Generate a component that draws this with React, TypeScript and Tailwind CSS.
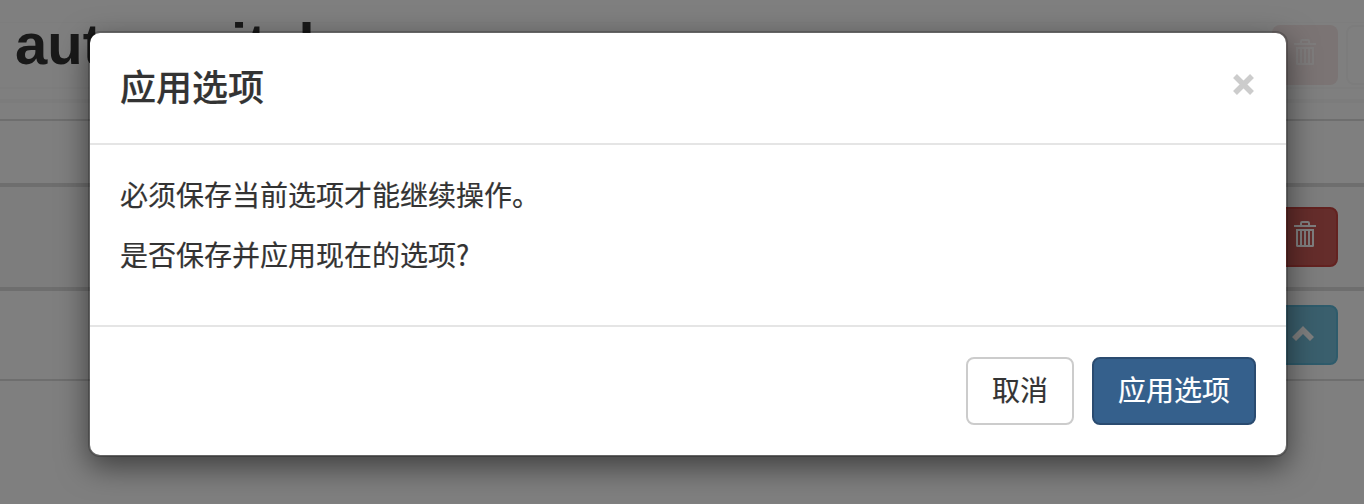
import React from "react";

function Trash({ className, faint }: { className: string; faint?: boolean }) {
  return (
    <svg viewBox="0 0 22 27" className={className} fill="none" stroke="currentColor">
      <path d="M0 5h22" strokeWidth="2" />
      <path d="M7 4.5V2.2Q7 1 8.2 1h5.6Q15 1 15 2.2v2.3" strokeWidth="2" />
      <path d="M2 8h18v16.5q0 1.500-1.500 1.500h-15q-1.500 0-1.500-1.500z" fill="currentColor" stroke="none" />
      <path
        d="M5 10v14M9 10v14M13 10v14M17 10v14"
        className={faint ? "stroke-[#f6e9e8]" : "stroke-[#cb5b56]"}
        strokeWidth="2"
      />
    </svg>
  );
}

export default function App() {
  return (
    <div className="relative h-[504px] w-full overflow-hidden bg-white font-['Noto_Sans_CJK_SC',sans-serif] text-[28px] leading-10 text-[#333]">
      <header className="flex h-[119px] flex-col">
        <div className="h-[23px] border-b border-[#fbfbfb]" />
        <div className="flex h-[66px] items-start justify-between border-b-2 border-[#fafafa] pl-[15px]">
          <h2 className="-mt-3 font-['Liberation_Sans',sans-serif] text-[58px] font-bold leading-[66px]">auto switch</h2>
          <div className="flex pt-[2px]">
            <div className="flex h-[60px] w-[66px] justify-center rounded-lg bg-[#f6e9e8] pt-[14px]">
              <Trash faint className="h-[27px] w-[22px] text-[#fdf9f9]" />
            </div>
            <div className="ml-2 h-[60px] w-[18px] rounded-l-lg border-2 border-r-0 border-[#f8f8f8]" />
          </div>
        </div>
        <div className="mt-[10px] h-1 bg-[#f8f8f8]" />
      </header>
      <div className="h-16 border-t-2 border-[#ddd]" />
      <div className="flex h-[104px] justify-end border-t-4 border-[#ddd] bg-[#fbfbfb] pr-[26px] pt-5">
        <button className="flex h-[60px] w-[66px] justify-center rounded-lg border-2 border-[#c64540] bg-[#cb5b56] pt-[12px]">
          <Trash className="h-[27px] w-[22px] text-white" />
        </button>
      </div>
      <div className="flex h-[94px] justify-end border-b-2 border-t-4 border-[#ddd] pr-[26px] pt-[14px]">
        <button className="flex h-[60px] w-[70px] justify-center rounded-lg border-2 border-[#5cb6d6] bg-[#74bfdb] pt-[19px] text-white">
          <svg viewBox="0 0 22 15" className="h-[15px] w-[22px]" fill="currentColor">
            <path d="M11 0l11 11-4 4-7-7-7 7-4-4z" />
          </svg>
        </button>
      </div>

      <div className="absolute inset-0 bg-black/50 px-[88px] pt-[31px]">
        <section
          role="dialog"
          className="w-[1200px] rounded-xl border-2 border-black/20 bg-white bg-clip-padding shadow-[0_10px_30px_rgba(0,0,0,0.5)]"
        >
          <div className="flex h-28 items-start justify-between border-b-2 border-[#e5e5e5] px-[30px] pt-[27px]">
            <h4 className="text-[36px] font-medium leading-[51px] [-webkit-text-stroke:0.2px_#333]">应用选项</h4>
            <button aria-label="close" className="mr-[2px] mt-[14px] text-[#ccc]">
              <svg viewBox="0 0 21 21" className="h-[21px] w-[21px]" fill="none" stroke="currentColor" strokeWidth="5.5">
                <path d="M2 2l17 17M19 2L2 19" />
              </svg>
            </button>
          </div>
          <div className="flex h-[180px] flex-col gap-5 px-[30px] pt-[29px] [-webkit-text-stroke:0.2px_#333]">
            <p>必须保存当前选项才能继续操作。</p>
            <p>是否保存并应用现在的选项?</p>
          </div>
          <div className="flex h-[130px] justify-end gap-[18px] border-t-2 border-[#e5e5e5] p-[30px]">
            <button className="h-[68px] w-[108px] rounded-lg border-2 border-[#ccc] bg-white pb-1 [-webkit-text-stroke:0.2px_#333]">
              取消
            </button>
            <button className="h-[68px] w-[164px] rounded-lg border-2 border-[#2a4b70] bg-[#35608c] pb-1 text-white [-webkit-text-stroke:0.2px_#fff]">
              应用选项
            </button>
          </div>
        </section>
      </div>
    </div>
  );
}
